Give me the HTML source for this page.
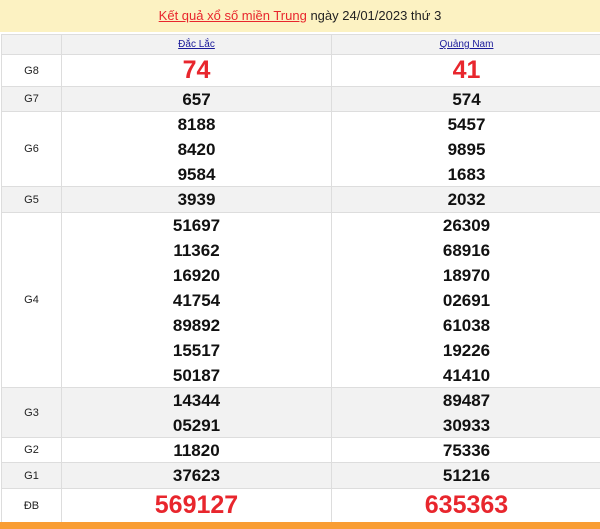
<!DOCTYPE html>
<html><head><meta charset="utf-8"><style>
*{margin:0;padding:0;box-sizing:border-box}
body{width:600px;height:529px;overflow:hidden;background:#fff;font-family:"Liberation Sans",Arial,sans-serif;position:relative}
.top{position:absolute;left:0;top:0;width:600px;height:32px;background:#fcf2c2;text-align:center;font-size:13px;line-height:32px;color:#222}
.top a{color:#e8262d;text-decoration:underline}
.tbl{position:absolute;left:1px;top:34px;width:600px;border-top:1px solid #ddd;border-left:1px solid #ddd}
.r{display:flex;border-bottom:1px solid #ddd}
.r.g{background:#f2f2f2}
.c0{width:60px;border-right:1px solid #ddd;display:flex;align-items:center;justify-content:center;font-size:11px;color:#222}
.c1{width:270px;border-right:1px solid #ddd;display:flex;flex-direction:column;justify-content:center;align-items:center;font-weight:bold;font-size:17px;line-height:25px;color:#111}
.c2{flex:1;display:flex;flex-direction:column;justify-content:center;align-items:center;font-weight:bold;font-size:17px;line-height:25px;color:#111}
.hd a{font-size:10px;font-weight:normal;color:#1a1a9a;text-decoration:underline}
.red{color:#e8262d;font-size:25px}
.bar{position:absolute;left:0;top:522px;width:600px;height:7px;background:#f99d33}
</style></head><body>
<div class="top"><a>Kết quả xổ số miền Trung</a> ngày 24/01/2023 thứ 3</div>
<div class="tbl">
<div class="r g hd" style="height:20px"><div class="c0"></div><div class="c1"><a>Đắc Lắc</a></div><div class="c2"><a>Quảng Nam</a></div></div>
<div class="r" style="height:32px"><div class="c0">G8</div><div class="c1 red">74</div><div class="c2 red">41</div></div>
<div class="r g" style="height:25px"><div class="c0">G7</div><div class="c1">657</div><div class="c2">574</div></div>
<div class="r" style="height:75px"><div class="c0">G6</div><div class="c1"><div>8188</div><div>8420</div><div>9584</div></div><div class="c2"><div>5457</div><div>9895</div><div>1683</div></div></div>
<div class="r g" style="height:26px"><div class="c0">G5</div><div class="c1">3939</div><div class="c2">2032</div></div>
<div class="r" style="height:175px"><div class="c0">G4</div><div class="c1"><div>51697</div><div>11362</div><div>16920</div><div>41754</div><div>89892</div><div>15517</div><div>50187</div></div><div class="c2"><div>26309</div><div>68916</div><div>18970</div><div>02691</div><div>61038</div><div>19226</div><div>41410</div></div></div>
<div class="r g" style="height:50px"><div class="c0">G3</div><div class="c1"><div>14344</div><div>05291</div></div><div class="c2"><div>89487</div><div>30933</div></div></div>
<div class="r" style="height:25px"><div class="c0">G2</div><div class="c1">11820</div><div class="c2">75336</div></div>
<div class="r g" style="height:26px"><div class="c0">G1</div><div class="c1">37623</div><div class="c2">51216</div></div>
<div class="r" style="height:34px"><div class="c0">ĐB</div><div class="c1 red">569127</div><div class="c2 red">635363</div></div>
</div>
<div class="bar"></div>
</body></html>
